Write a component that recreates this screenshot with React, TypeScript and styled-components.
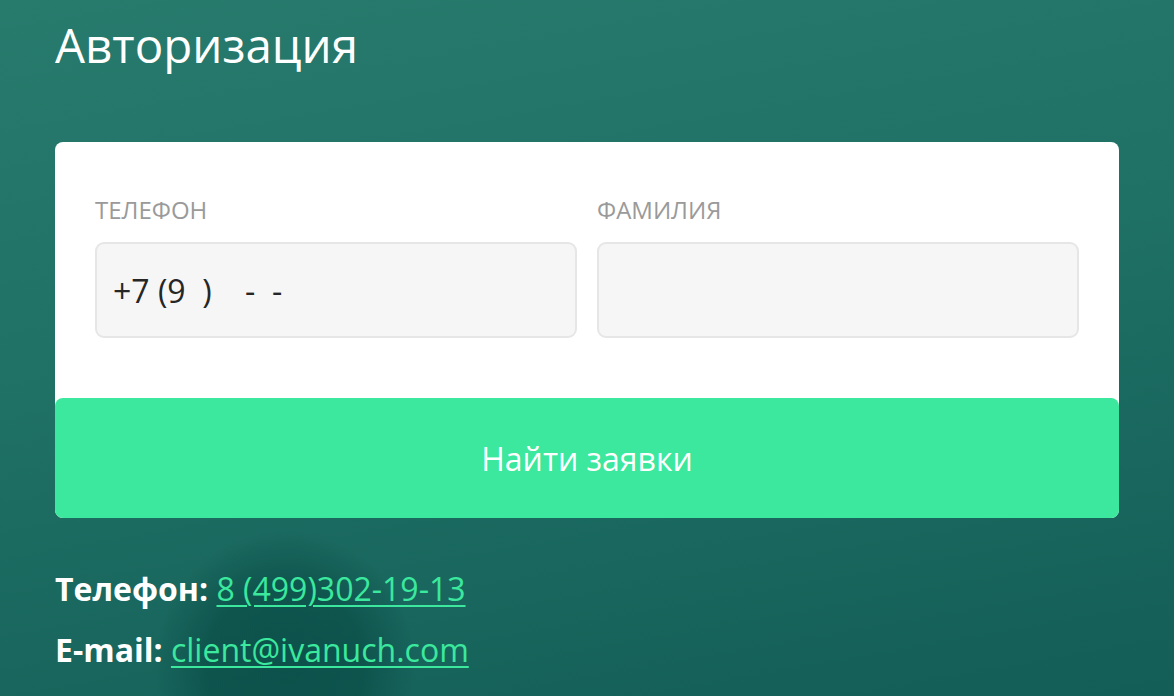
import styled, { createGlobalStyle } from "styled-components";

const GlobalStyle = createGlobalStyle`
  html, body {
    margin: 0;
    padding: 0;
  }
  body {
    font-family: "Open Sans", "Noto Sans", sans-serif;
    min-height: 696px;
    background:
      radial-gradient(ellipse 130px 135px at 285px 665px, rgba(5, 68, 63, 0.6) 0%, rgba(5, 68, 63, 0.5) 60%, rgba(5, 68, 63, 0) 100%),
      linear-gradient(170deg, #277b6d 0%, #1f7065 45%, #135e57 100%);
    background-repeat: no-repeat;
  }
`;

const Page = styled.div`
  padding: 13px 55px 0;
  display: flex;
  flex-direction: column;
`;

const Title = styled.h1`
  margin: 0;
  font-size: 47.5px;
  font-weight: 400;
  line-height: 64px;
  color: #ffffff;
`;

const Card = styled.div`
  margin-top: 65px;
  background: #ffffff;
  border-radius: 8px;
`;

const Fields = styled.div`
  display: grid;
  grid-template-columns: 1fr 1fr;
  gap: 20px;
  padding: 55px 40px 60px;
`;

const Field = styled.label`
  display: flex;
  flex-direction: column;
  gap: 19px;
`;

const Label = styled.span`
  font-size: 24px;
  line-height: 26px;
  text-transform: uppercase;
  color: #9a9a9a;
`;

const Input = styled.input`
  box-sizing: border-box;
  height: 96px;
  width: 100%;
  padding: 0 16px;
  background: #f6f6f6;
  border: 2px solid #e6e6e6;
  border-radius: 9px;
  font-family: inherit;
  font-size: 32px;
  color: #262626;
  outline: none;
`;

const Submit = styled.button`
  display: block;
  width: 100%;
  height: 120px;
  border: none;
  border-radius: 8px;
  background: #3be89d;
  color: #ffffff;
  font-family: inherit;
  font-size: 32px;
  cursor: pointer;
`;

const Contacts = styled.div`
  margin-top: 49px;
  display: flex;
  flex-direction: column;
  gap: 17px;
`;

const ContactRow = styled.p`
  margin: 0;
  font-size: 32px;
  line-height: 44px;
  color: #ffffff;
`;

const Key = styled.b`
  font-weight: 700;
`;

const Link = styled.a`
  color: #3be89d;
  text-decoration: underline;
  text-decoration-thickness: 2px;
  text-underline-offset: 4px;
`;

export default function App() {
  return (
    <>
      <GlobalStyle />
      <Page>
        <Title>Авторизация</Title>
        <Card>
          <Fields>
            <Field>
              <Label>Телефон</Label>
              <Input type="tel" defaultValue="+7 (9  )    -  -" />
            </Field>
            <Field>
              <Label>Фамилия</Label>
              <Input type="text" />
            </Field>
          </Fields>
          <Submit type="button">Найти заявки</Submit>
        </Card>
        <Contacts>
          <ContactRow>
            <Key>Телефон:</Key> <Link href="#">8 (499)302-19-13</Link>
          </ContactRow>
          <ContactRow>
            <Key>E-mail:</Key> <Link href="#">client@ivanuch.com</Link>
          </ContactRow>
        </Contacts>
      </Page>
    </>
  );
}
